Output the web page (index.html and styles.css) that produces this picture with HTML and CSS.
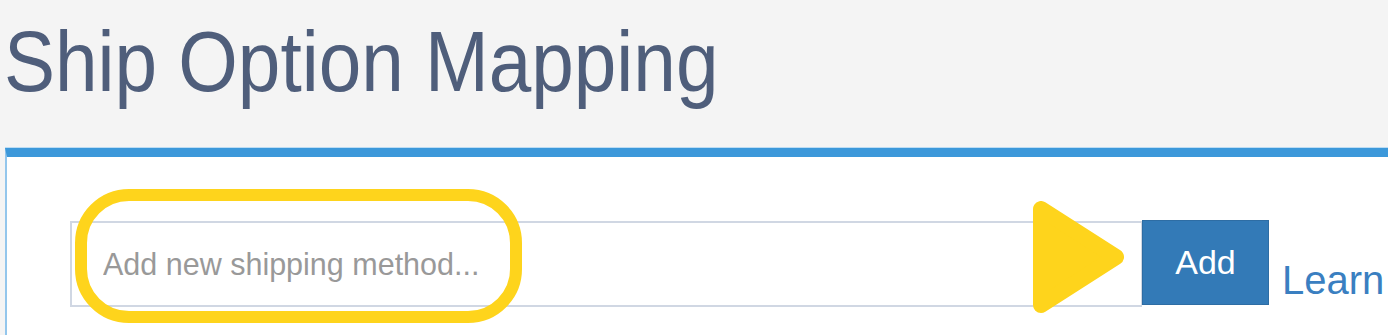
FILE: index.html
```html
<!DOCTYPE html>
<html lang="en">
<head>
<meta charset="utf-8">
<title>Ship Option Mapping</title>
<link rel="stylesheet" href="styles.css">
</head>
<body>
  <h1 class="title">Ship Option Mapping</h1>
  <section class="panel">
    <div class="add-row">
      <input class="method-input" type="text" placeholder="Add new shipping method...">
      <button class="add-btn" type="button">Add</button>
      <a class="learn-link" href="#">Learn</a>
    </div>
    <div class="ring-callout"></div>
    <svg class="arrow-callout" width="92" height="112" viewBox="0 0 92 112" aria-hidden="true">
      <polygon points="8,8 8,104 83,56" fill="#fed41c" stroke="#fed41c" stroke-width="16" stroke-linejoin="round"/>
    </svg>
  </section>
</body>
</html>
```

FILE: styles.css
```css
html, body {
  margin: 0;
  padding: 0;
}

body {
  background: #f4f4f4;
  font-family: "Liberation Sans", Arial, sans-serif;
  overflow: hidden;
  width: 1388px;
  height: 335px;
}

.title {
  margin: 0 0 0 3.5px;
  padding-top: 18.5px;
  font-size: 85px;
  line-height: 85px;
  font-weight: normal;
  color: #4f5e7b;
  white-space: nowrap;
  transform: scaleX(0.9);
  transform-origin: left top;
}

.panel {
  position: relative;
  margin: 44.5px -60px 0 5px;
  height: 115px;
  background: #ffffff;
  border-top: 9px solid #3c98da;
  border-left: 2px solid #93c6ec;
  box-shadow: 0 -1px 0 #bcdcf3;
  padding: 63px 0 0 63px;
}

.add-row {
  display: flex;
  align-items: flex-start;
}

.method-input {
  box-sizing: border-box;
  width: 1072px;
  height: 86px;
  margin: 1px 0 0 0;
  padding: 0 0 0 31px;
  border: 2px solid #d0d7e3;
  border-right-width: 1px;
  background: #fff;
  font-family: "Liberation Sans", Arial, sans-serif;
  font-size: 30.5px;
  color: #555;
  outline: none;
}

.method-input::placeholder {
  color: #999;
}

.add-btn {
  box-sizing: border-box;
  width: 127px;
  height: 85px;
  margin: 0;
  padding: 0;
  border: 1px solid #2e6da4;
  background: #337ab7;
  color: #fff;
  font-family: "Liberation Sans", Arial, sans-serif;
  font-size: 34px;
}

.learn-link {
  margin: 40px 0 0 13px;
  font-size: 40px;
  line-height: 40px;
  color: #3a7fc1;
  text-decoration: none;
  white-space: nowrap;
}

.ring-callout {
  position: absolute;
  left: 68px;
  top: 32px;
  box-sizing: border-box;
  width: 447px;
  height: 134px;
  border: 12px solid #fed41c;
  border-radius: 54px;
  pointer-events: none;
}

.arrow-callout {
  position: absolute;
  left: 1026px;
  top: 44px;
  pointer-events: none;
}
```
